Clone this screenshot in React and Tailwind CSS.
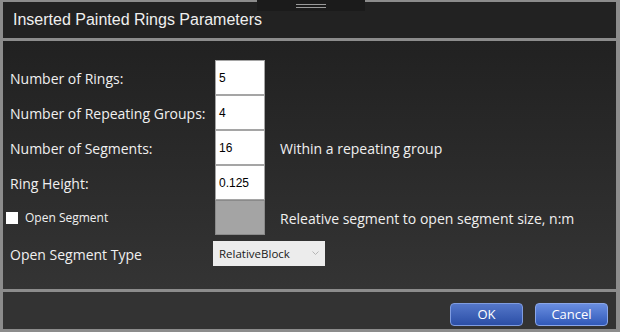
export default function App() {
  const sans = { fontFamily: '"Open Sans", "Noto Sans", sans-serif' };
  const rows = [
    { label: "Number of Rings:", value: "5" },
    { label: "Number of Repeating Groups:", value: "4" },
    { label: "Number of Segments:", value: "16", note: "Within a repeating group" },
    { label: "Ring Height:", value: "0.125" },
  ];
  return (
    <div className="relative w-[620px] h-[332px] bg-[#8c8c8c] pl-[3px] pr-[4px] pt-[2px] pb-[3px] flex flex-col overflow-hidden">
      <div className="absolute left-[257px] top-0 w-[108px] h-[11px] bg-[#1b1b1b] flex flex-col items-center justify-center gap-[2px]">
        <div className="w-[30px] h-px bg-[#9a9a9a]" />
        <div className="w-[30px] h-px bg-[#9a9a9a]" />
      </div>
      <div className="h-[36px] bg-[#222222] flex items-center pl-[10px] shrink-0">
        <span className="text-[16px] text-[#efefef]" style={{ fontFamily: '"Liberation Sans", Arial, sans-serif' }}>
          Inserted Painted Rings Parameters
        </span>
      </div>
      <div className="h-[3px] shrink-0" />
      <div className="h-[248px] shrink-0 bg-gradient-to-b from-[#212121] to-[#343434] pt-[19px] flex flex-col" style={sans}>
        {rows.map((r) => (
          <div key={r.label} className="h-[35px] flex items-center">
            <div className="w-[212px] pl-[7px] pt-[2px] text-[14px] text-[#f0f0f0]">{r.label}</div>
            <div className="w-[50px] h-[35px] bg-white border border-[#a5a5a5] flex items-center pl-[3px]">
              <span className="text-[12px] text-black" style={{ fontFamily: '"Liberation Sans", Arial, sans-serif' }}>{r.value}</span>
            </div>
            {r.note && <div className="pl-[15px] pt-[2px] text-[14px] text-[#f0f0f0]">{r.note}</div>}
          </div>
        ))}
        <div className="h-[35px] flex items-center">
          <div className="w-[212px] pl-[3px] flex items-center gap-[7px]">
            <div className="w-[12px] h-[12px] bg-white" />
            <span className="text-[12px] text-[#f0f0f0]">Open Segment</span>
          </div>
          <div className="w-[50px] h-[35px] bg-[#a4a4a4] border border-[#8a8a8a]" />
          <div className="pl-[15px] pt-[2px] text-[14px] text-[#f0f0f0]">Releative segment to open segment size, n:m</div>
        </div>
        <div className="h-[25px] mt-[6px] flex items-center">
          <div className="w-[212px] pl-[7px] pt-[2px] text-[14px] text-[#f0f0f0]">Open Segment Type</div>
          <div className="w-[112px] h-[25px] bg-[#ececec] flex items-center justify-between pl-[6px] pr-[6px] -ml-[2px]">
            <span className="text-[11.5px] text-[#1a1a1a]">RelativeBlock</span>
            <svg width="7" height="5" viewBox="0 0 7 5"><path d="M0.5 0.5 L3.5 3.5 L6.5 0.5" stroke="#b5b5b5" strokeWidth="1" fill="none" /></svg>
          </div>
        </div>
      </div>
      <div className="h-[3px] shrink-0" />
      <div className="flex-1 bg-[#333333] flex justify-end items-start pt-[11px] pr-[8px] gap-[12px]" style={sans}>
        <button className="w-[73px] h-[23px] rounded-[4px] border border-[#7f9ce0] bg-gradient-to-b from-[#5577c9] to-[#2b4ea6] text-white text-[13px] flex items-center justify-center">OK</button>
        <button className="w-[73px] h-[23px] rounded-[4px] border border-[#8aa6e8] bg-gradient-to-b from-[#6a8ee0] to-[#3159b9] text-white text-[13px] flex items-center justify-center">Cancel</button>
      </div>
    </div>
  );
}
